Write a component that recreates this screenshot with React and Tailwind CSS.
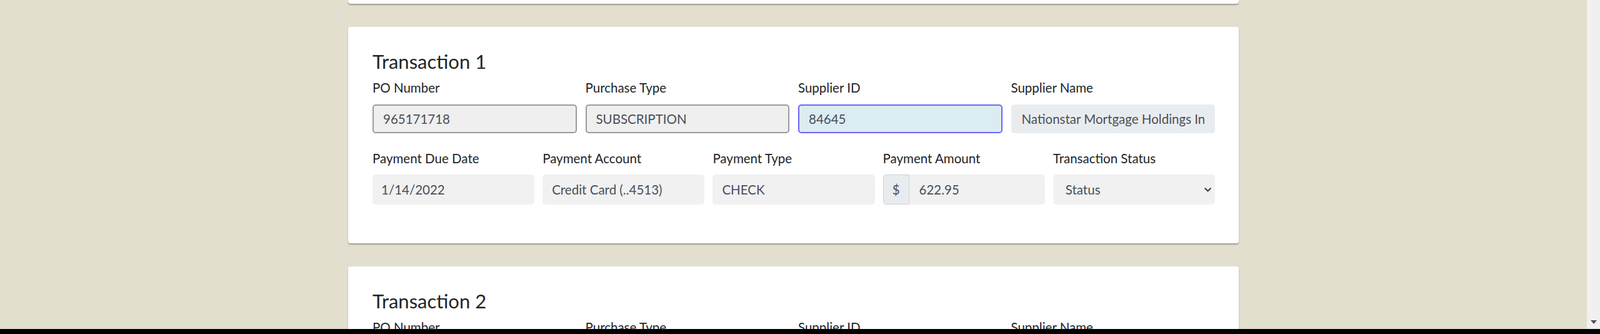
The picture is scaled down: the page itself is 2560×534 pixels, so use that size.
import React from 'react'

// Transaction review screen: stacked cards on a beige canvas

const TOP_FIELDS = [
  { label: 'PO Number', value: '965171718', kind: 'locked' },
  { label: 'Purchase Type', value: 'SUBSCRIPTION', kind: 'locked' },
  { label: 'Supplier ID', value: '84645', kind: 'focus' },
  { label: 'Supplier Name', value: 'Nationstar Mortgage Holdings Inc.', kind: 'plain' },
]

const INPUT_KIND = {
  locked: 'bg-[#efefef] border-[#9b9b9b]',
  focus: 'bg-[#dcecf3] border-[#6b66f5]',
  plain: 'bg-[#e9ecef] border-transparent',
}

function Label({ children }) {
  return <label className="block text-[20.5px] leading-[24px] text-[#212529]">{children}</label>
}

function Chevron() {
  return (
    <svg width="11" height="7" viewBox="0 0 11 7" fill="none">
      <path d="M1.2 1.2 5.5 5.5 9.8 1.2" stroke="#343a40" strokeWidth="2" strokeLinecap="round" strokeLinejoin="round" />
    </svg>
  )
}

function TransactionCard({ n, due, account, type, amount }) {
  return (
    <div className="bg-white rounded-[4px] shadow-[0_2px_2px_rgba(0,0,0,0.3)] pt-[37px] pb-[62px] pl-[39px] pr-[38px]">
      <h2 className="text-[31px] leading-[37px] text-[#212529] font-normal">Transaction {n}</h2>

      <div className="grid grid-cols-4 gap-x-[14px] mt-[11px]">
        {TOP_FIELDS.map(f => (
          <div key={f.label}>
            <Label>{f.label}</Label>
            <input
              readOnly
              value={f.value}
              className={`mt-[15px] block w-full h-[46px] rounded-[5px] border-2 px-[15px] text-[20.5px] text-[#495057] outline-none ${INPUT_KIND[f.kind]}`}
            />
          </div>
        ))}
      </div>

      <div className="grid grid-cols-5 gap-x-[13px] mt-[28px]">
        <div>
          <Label>Payment Due Date</Label>
          <div className="mt-[14px] h-[48px] rounded-[5px] bg-[#f1f1f1] px-[14px] flex items-center text-[20.5px] text-[#495057]">{due}</div>
        </div>
        <div>
          <Label>Payment Account</Label>
          <div className="mt-[14px] h-[48px] rounded-[5px] bg-[#f1f1f1] px-[15px] flex items-center text-[20.5px] text-[#495057]">{account}</div>
        </div>
        <div>
          <Label>Payment Type</Label>
          <div className="mt-[14px] h-[48px] rounded-[5px] bg-[#f1f1f1] px-[15px] flex items-center text-[20.5px] text-[#495057]">{type}</div>
        </div>
        <div>
          <Label>Payment Amount</Label>
          <div className="mt-[14px] h-[48px] flex">
            <span className="w-[42px] flex items-center justify-center rounded-l-[5px] border border-[#ced4da] bg-[#e9ecef] text-[20.5px] text-[#495057]">$</span>
            <div className="flex-1 rounded-r-[5px] bg-[#f1f1f1] px-[16px] flex items-center text-[20.5px] text-[#495057]">{amount}</div>
          </div>
        </div>
        <div>
          <Label>Transaction Status</Label>
          <div className="mt-[14px] h-[48px] rounded-[5px] bg-[#f1f1f1] pl-[20px] pr-[6px] flex items-center justify-between text-[20.5px] text-[#495057]">
            <span>Status</span>
            <Chevron />
          </div>
        </div>
      </div>
    </div>
  )
}

export default function App() {
  return (
    <div className="w-[2560px] h-[534px] overflow-hidden flex flex-col bg-black [font-family:Lato,'Open_Sans',sans-serif]">
      <div className="flex h-[526px]">
        <main className="flex-1 bg-[#e2dfce] overflow-hidden pl-[557px]">
          <div className="w-[1425px] flex flex-col gap-[37px]">
            <div className="h-[6px] bg-white rounded-b-[4px] shadow-[0_2px_2px_rgba(0,0,0,0.3)]" />
            <TransactionCard n={1} due="1/14/2022" account="Credit Card (..4513)" type="CHECK" amount="622.95" />
            <TransactionCard n={2} due="" account="" type="" amount="" />
          </div>
        </main>
        {/* Browser scrollbar */}
        <div className="w-[21px] bg-[#f0f0f0] flex flex-col justify-end items-center pb-[8px]">
          <svg width="10" height="6" viewBox="0 0 10 6">
            <path d="M0 0h10L5 6z" fill="#505050" />
          </svg>
        </div>
      </div>
      <div className="h-[8px] bg-black" />
    </div>
  )
}
